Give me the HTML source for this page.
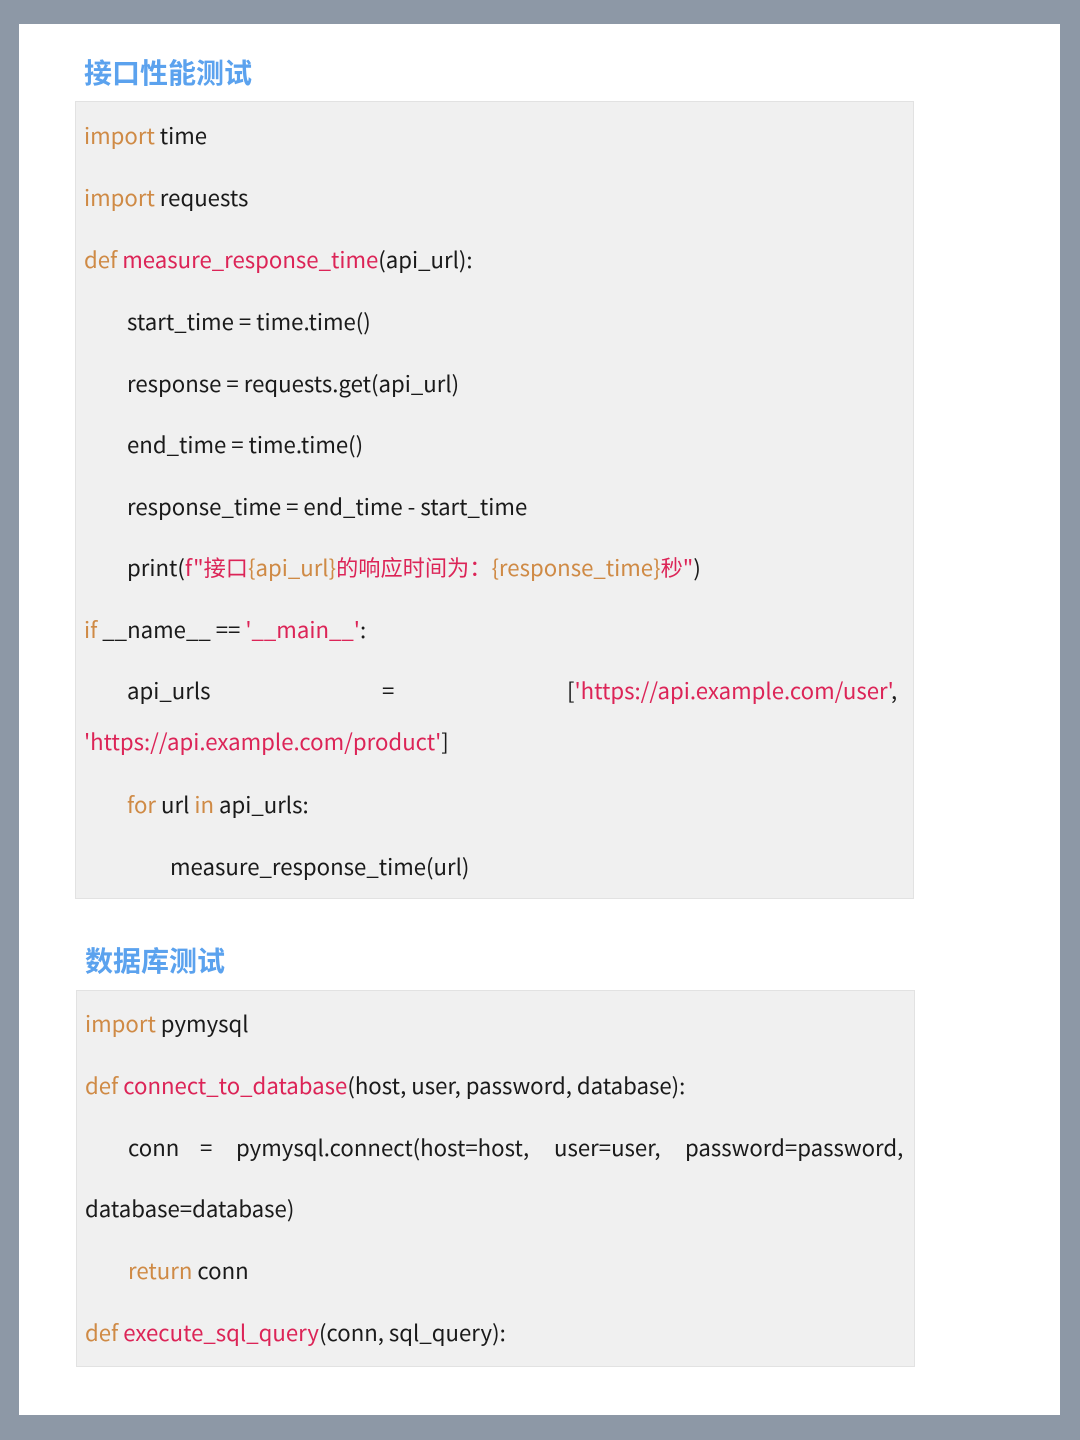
<!DOCTYPE html>
<html><head><meta charset="utf-8"><style>
*{margin:0;padding:0;box-sizing:border-box}
body{width:1080px;height:1440px;background:#8d98a6;position:relative;overflow:hidden;font-family:"Noto Sans CJK SC","Liberation Sans",sans-serif;color:#1a1a1a}
.card{position:absolute;left:19px;top:24px;width:1041px;height:1391px;background:#fff}
.box{position:absolute;background:#f0f0f0;border:1px solid #e2e2e2}
.l{position:absolute;font-size:22.2px;line-height:30px;white-space:pre;margin-top:-1px}
.h{position:absolute;font-size:28px;font-weight:700;color:#5ba2ee;line-height:36px}
.k{color:#cf8a45}.r{color:#dc2457}
</style></head><body>
<div class="card"></div>
<div class="h" style="left:84px;top:54px">接口性能测试</div>
<div class="box" style="left:75px;top:101px;width:839px;height:798px"></div>
<div class="l" style="left:84px;top:121px"><span class="k">import</span> time</div>
<div class="l" style="left:84px;top:183px"><span class="k">import</span> requests</div>
<div class="l" style="left:84px;top:245px"><span class="k">def</span> <span class="r">measure_response_time</span>(api_url):</div>
<div class="l" style="left:127px;top:307px">start_time = time.time()</div>
<div class="l" style="left:127px;top:369px">response = requests.get(api_url)</div>
<div class="l" style="left:127px;top:430px">end_time = time.time()</div>
<div class="l" style="left:127px;top:492px">response_time = end_time - start_time</div>
<div class="l" style="left:127px;top:553px">print(<span class="r">f"接口</span><span class="k">{api_url}</span><span class="r">的响应时间为：</span><span class="k">{response_time}</span><span class="r">秒"</span>)</div>
<div class="l" style="left:84px;top:615px"><span class="k">if</span> __name__ == <span class="r">'__main__'</span>:</div>
<div class="l" style="left:127px;top:676px">api_urls</div>
<div class="l" style="left:382px;top:676px">=</div>
<div class="l" style="left:567px;top:676px">[<span class="r">'https://api.example.com/user'</span>,</div>
<div class="l" style="left:84px;top:727px"><span class="r">'https://api.example.com/product'</span>]</div>
<div class="l" style="left:127px;top:790px"><span class="k">for</span> url <span class="k">in</span> api_urls:</div>
<div class="l" style="left:170px;top:852px">measure_response_time(url)</div>

<div class="h" style="left:85px;top:942px">数据库测试</div>
<div class="box" style="left:76px;top:990px;width:839px;height:377px"></div>
<div class="l" style="left:85px;top:1009px"><span class="k">import</span> pymysql</div>
<div class="l" style="left:85px;top:1071px"><span class="k">def</span> <span class="r">connect_to_database</span>(host, user, password, database):</div>
<div class="l" style="left:128px;top:1133px">conn</div>
<div class="l" style="left:200px;top:1133px">=</div>
<div class="l" style="left:236px;top:1133px">pymysql.connect(host=host,</div>
<div class="l" style="left:554px;top:1133px">user=user,</div>
<div class="l" style="left:685px;top:1133px">password=password,</div>
<div class="l" style="left:85px;top:1194px">database=database)</div>
<div class="l" style="left:128px;top:1256px"><span class="k">return</span> conn</div>
<div class="l" style="left:85px;top:1318px"><span class="k">def</span> <span class="r">execute_sql_query</span>(conn, sql_query):</div>
</body></html>
